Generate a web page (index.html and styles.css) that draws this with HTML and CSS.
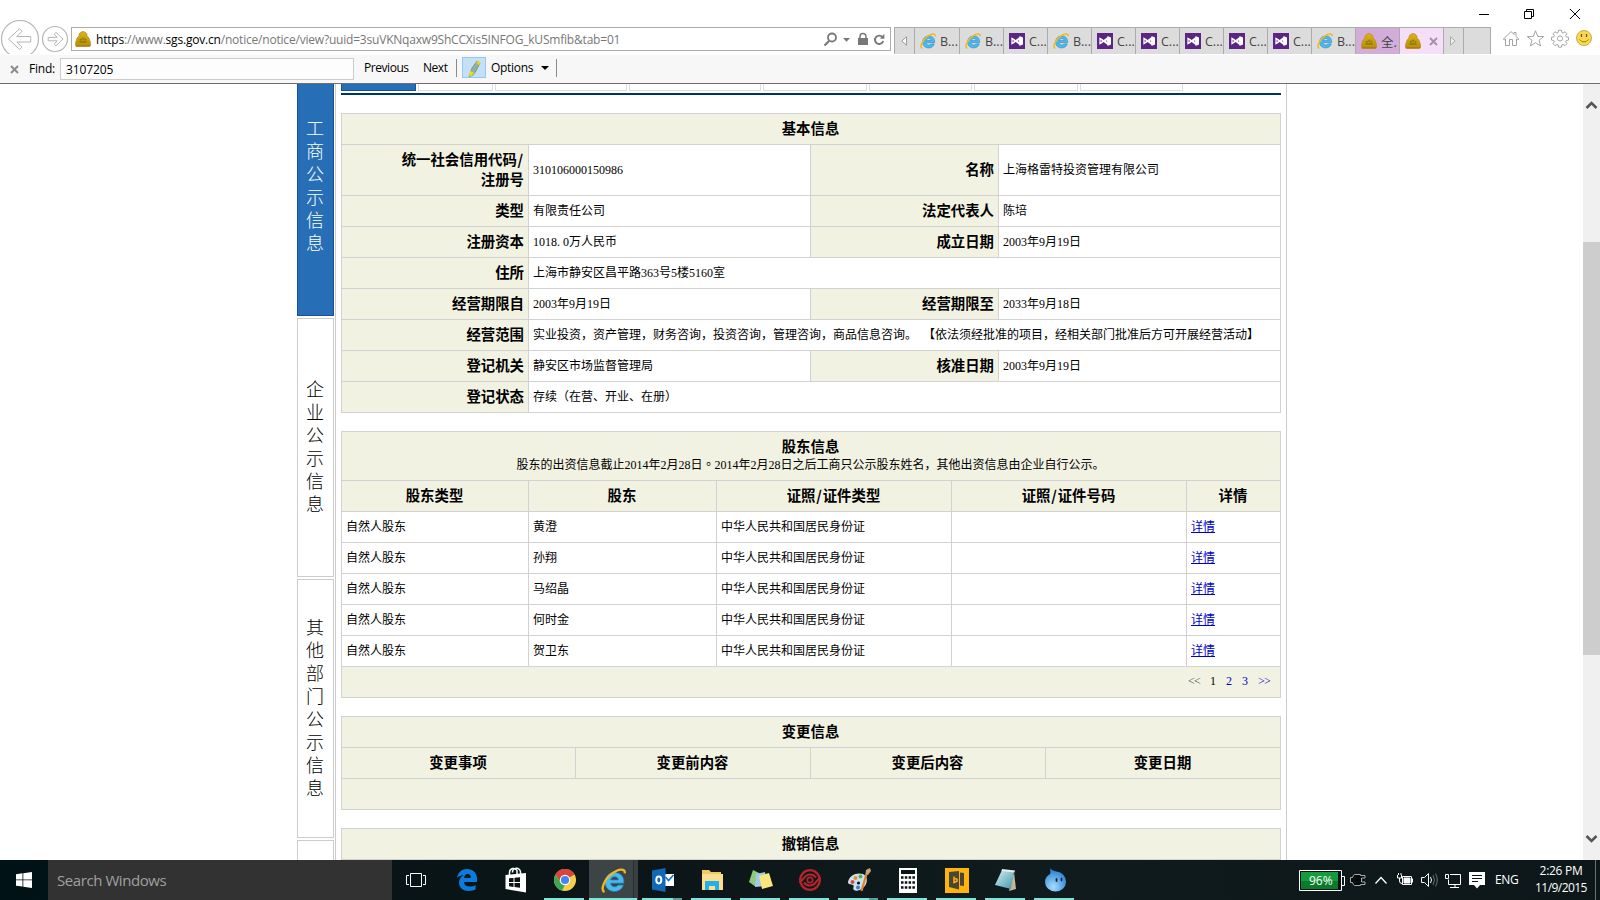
FILE: index.html
```html
<!DOCTYPE html>
<html lang="zh-CN">
<head>
<meta charset="utf-8">
<title>sgs.gov.cn</title>
<link rel="stylesheet" href="styles.css">
</head>
<body>
<svg class="defs" aria-hidden="true">
  <defs>
    <linearGradient id="gold" x1="0" y1="0" x2="0" y2="1"><stop offset="0" stop-color="#d9b31c"/><stop offset="1" stop-color="#b88d08"/></linearGradient>
    <linearGradient id="glass" x1="0" y1="0" x2="1" y2="1"><stop offset="0" stop-color="#d8f0f4"/><stop offset="1" stop-color="#3f96a8"/></linearGradient>
    <radialGradient id="drop" cx=".4" cy=".8" r=".8"><stop offset="0" stop-color="#a8dcff"/><stop offset="1" stop-color="#1c78d0"/></radialGradient>
  </defs>
  <symbol id="ie" viewBox="0 0 16 16">
    <path d="M14.600 9.700H6.200c.2 1.500 1.200 2.300 2.600 2.300 1 0 1.700-.4 2.200-1.100h3.300c-.8 2.600-2.900 4.100-5.700 4.100-3.500 0-6-2.400-6-5.900 0-3.600 2.500-6.200 6.100-6.200 3.900 0 6.300 2.700 5.900 6.800zM6.200 7.600h4.900c-.2-1.300-1.100-2-2.400-2S6.500 6.300 6.200 7.600z" fill="#4bb8ee" stroke="#1d7fba" stroke-width=".5"/>
    <path d="M2.300 15.300C-.6 14.500 1.800 7.500 7 3.600 11.300.4 15.600 0 15.200 3.400" fill="none" stroke="#f3b81c" stroke-width="1.500"/>
  </symbol>
  <symbol id="vs" viewBox="0 0 16 16">
    <rect width="16" height="16" fill="#5c2484"/>
    <path d="M3 5.500v5l4-2.500zM7.800 8l3-2.200v4.400z" fill="none" stroke="#fff" stroke-width="1.300"/>
    <path d="M3 5.500L11 11.500M3 10.500l8-6" stroke="#fff" stroke-width="1.300"/>
    <path d="M10.500 3l3.500 1.400v7.200L10.500 13z" fill="#fff"/>
  </symbol>
  <symbol id="emblem" viewBox="0 0 16 16">
    <path d="M6 1q2-1 4 0l2 2v2l2 2 1.700 5v2.500q-1 1.500-2.500 1.300H2.500Q.5 15.800.4 14v-2L2 7l2-2V3z" fill="url(#gold)" stroke="#b98517" stroke-width=".6"/>
    <path d="M4 8.500Q8 4 12 8.500L13.500 12q-5.500 2-11 0z" fill="#b99a0b"/>
    <path d="M5 8.800h1.500M7.300 7.900H9M9.800 8.800h1.300M4.500 11h7" stroke="#79650a" fill="none"/>
    <path d="M1 14.700h14" stroke="#b17716"/>
  </symbol>
</svg>

<div class="screen">
  <header class="chrome">
    <div class="caption">
      <svg width="160" height="27" viewBox="1440 0 160 27" fill="none" stroke="#000">
        <path d="M1479 14.500h10"/>
        <path d="M1524.500 11.500h7v7h-7zM1526.500 11.500v-2h7v7h-2"/>
        <path d="M1570 9l10 10M1580 9l-10 10"/>
      </svg>
    </div>
    <div class="navrow">
      <svg class="history" width="71" height="34" viewBox="0 20 71 34" fill="none" stroke="#b5b5b5">
        <circle cx="20" cy="39" r="18.500" stroke-width="1.200"/>
        <path d="M8.500 39l11-10.200 2.500 2.500-5.300 5.200h14v5.500H16.800l5.300 5.200-2.500 2.300z"/>
        <circle cx="55" cy="39" r="12.500" stroke-width="1.200"/>
        <path d="M63 39l-7-6.500-1.800 1.700 3 3.200h-9v3.400h9l-3 3.200 1.800 1.700z"/>
      </svg>
      <div class="address">
        <svg class="fav" width="16" height="16"><use href="#emblem"/></svg>
        <span class="url"><b>https</b>://www.<b>sgs.gov.cn</b>/notice/notice/view?uuid=3suVKNqaxw9ShCCXis5INFOG_kUSmfib&amp;tab=01</span>
        <svg class="tools" width="68" height="22" viewBox="820 28 68 22" fill="none" stroke="#777">
          <circle cx="832" cy="37.500" r="4" stroke-width="1.800"/><path d="M829 41l-4.500 4.500" stroke-width="2.200"/>
          <path d="M843 38h7l-3.500 3.700z" fill="#777" stroke="none"/>
          <path d="M858 38h10v7h-10z" fill="#777" stroke="none"/><path d="M860 38v-1.500a3 3 0 0 1 6 0V38" stroke-width="1.500"/>
          <path d="M882.500 37.200A4.200 4.200 0 1 0 883.200 41" stroke-width="1.900"/><path d="M880 38.800h4.300v-5z" fill="#777" stroke="none"/>
        </svg>
      </div>
      <div class="tabs">
        <span class="tab arrow"><svg width="6" height="10" viewBox="0 0 6 10"><path d="M5.500.8v8.400L.8 5z" fill="#fff" stroke="#999"/></svg></span>
        <span class="tab wide"><svg class="fav"><use href="#ie"/></svg>B...</span>
        <span class="tab"><svg class="fav"><use href="#ie"/></svg>B...</span>
        <span class="tab"><svg class="fav"><use href="#vs"/></svg>C...</span>
        <span class="tab"><svg class="fav"><use href="#ie"/></svg>B...</span>
        <span class="tab"><svg class="fav"><use href="#vs"/></svg>C...</span>
        <span class="tab"><svg class="fav"><use href="#vs"/></svg>C...</span>
        <span class="tab"><svg class="fav"><use href="#vs"/></svg>C...</span>
        <span class="tab"><svg class="fav"><use href="#vs"/></svg>C...</span>
        <span class="tab"><svg class="fav"><use href="#vs"/></svg>C...</span>
        <span class="tab"><svg class="fav"><use href="#ie"/></svg>B...</span>
        <span class="tab group"><svg class="fav"><use href="#emblem"/></svg>全.</span>
        <span class="tab active"><svg class="fav"><use href="#emblem"/></svg><svg class="close" width="9" height="9" viewBox="0 0 9 9"><path d="M1 1l7 7M8 1L1 8" stroke="#a590a8" stroke-width="1.900"/></svg></span>
        <span class="tab arrow"><svg width="6" height="10" viewBox="0 0 6 10"><path d="M.5.8v8.400L5.200 5z" fill="#eee" stroke="#aaa"/></svg></span>
        <span class="tab new"></span>
      </div>
      <svg class="commands" width="109" height="27" viewBox="1491 27 109 27" fill="none" stroke="#a3a3a3">
        <path d="M1503.500 39l7.500-7.500 3 3v-2h2v4l2.800 2.500-1 1-1.300-1v6.500h-4v-6h-3v6h-4V39l-1.300 1z"/>
        <path d="M1535.500 30.800l2.200 5.600 6 .2-4.700 3.700 1.600 5.700-5.100-3.300-5.100 3.300 1.600-5.700-4.700-3.700 6-.2z"/>
        <path d="M1558.600 31h2.800l.4 2.200 1.300.6 1.900-1.300 2 2-1.300 1.900.6 1.300 2.200.4v2.800l-2.200.4-.6 1.300 1.300 1.900-2 2-1.900-1.300-1.300.6-.4 2.200h-2.800l-.4-2.200-1.300-.6-1.900 1.300-2-2 1.300-1.900-.6-1.300-2.200-.4v-2.800l2.200-.4.600-1.300-1.300-1.900 2-2 1.900 1.300 1.300-.6z" transform="translate(0 -.8)"/>
        <circle cx="1560" cy="38.500" r="2.600"/>
        <circle cx="1584" cy="38" r="7.500" fill="#fbd94d" stroke="#c9a94a"/>
        <path d="M1581.500 34v3M1586.500 34v3" stroke="#6b5310" stroke-width="1.300"/><path d="M1579.500 39.500q4.500 5 9 0" stroke="#a17c20"/>
      </svg>
    </div>
    <div class="findbar">
      <svg class="x" width="9" height="9" viewBox="0 0 9 9"><path d="M1 1l7 7M8 1L1 8" stroke="#8b8b8b" stroke-width="1.900"/></svg>
      <span class="lbl">Find:</span>
      <span class="field">3107205</span>
      <span class="prev">Previous</span>
      <span class="next">Next</span>
      <i class="sep"></i>
      <span class="marker"><svg width="22" height="20" viewBox="0 0 22 20"><path d="M7 16l2-6 5-7 3 2-4 8-3 4-4 2z" fill="#8fb0a4" stroke="#75806a" stroke-width=".7"/><path d="M13 5l1.500-2.200 3 1.800-1.300 2.600z" fill="#e6d21c"/><path d="M7.500 13l3.500 1.800-2 2.500-3 1.500z" fill="#f2e200"/></svg></span>
      <span class="opts">Options</span>
      <svg class="caret" width="8" height="4"><path d="M0 0h8L4 4z"/></svg>
      <i class="sep"></i>
    </div>
  </header>

  <main class="viewport">
    <nav class="side">
      <div class="sideitem on">工商公示信息</div>
      <div class="sideitem">企业公示信息</div>
      <div class="sideitem">其他部门公示信息</div>
      <div class="sideitem"></div>
    </nav>
    <section class="content">
      <div class="subtabs">
        <i class="on"></i><i></i><i class="l"></i><i class="l"></i><i class="m"></i><i class="s"></i><i class="m"></i><i class="s"></i>
      </div>

      <div class="grid basic">
        <div class="th full">基本信息</div>
        <div class="th r tall">统一社会信用代码<span class="half">/</span><br>注册号</div><div class="high">310106000150986</div><div class="th r">名称</div><div class="high">上海格雷特投资管理有限公司</div>
        <div class="th r">类型</div><div>有限责任公司</div><div class="th r">法定代表人</div><div>陈培</div>
        <div class="th r">注册资本</div><div>1018<span class="dot">.</span>0万人民币</div><div class="th r">成立日期</div><div>2003年9月19日</div>
        <div class="th r">住所</div><div class="span3">上海市静安区昌平路363号5楼5160室</div>
        <div class="th r">经营期限自</div><div>2003年9月19日</div><div class="th r">经营期限至</div><div>2033年9月18日</div>
        <div class="th r">经营范围</div><div class="span3">实业投资，资产管理，财务咨询，投资咨询，管理咨询，商品信息咨询。&nbsp;&nbsp;【依法须经批准的项目，经相关部门批准后方可开展经营活动】</div>
        <div class="th r">登记机关</div><div>静安区市场监督管理局</div><div class="th r">核准日期</div><div>2003年9月19日</div>
        <div class="th r">登记状态</div><div class="span3">存续（在营、开业、在册）</div>
      </div>

      <div class="grid holders">
        <div class="th full stack"><span>股东信息</span><small>股东的出资信息截止2014年2月28日<span class="mid" lang="zh-TW">。</span>2014年2月28日之后工商只公示股东姓名，其他出资信息由企业自行公示。</small></div>
        <div class="th">股东类型</div><div class="th">股东</div><div class="th">证照<span class="half">/</span>证件类型</div><div class="th">证照<span class="half">/</span>证件号码</div><div class="th">详情</div>
        <div>自然人股东</div><div>黄澄</div><div>中华人民共和国居民身份证</div><div></div><div><a href="#">详情</a></div>
        <div>自然人股东</div><div>孙翔</div><div>中华人民共和国居民身份证</div><div></div><div><a href="#">详情</a></div>
        <div>自然人股东</div><div>马绍晶</div><div>中华人民共和国居民身份证</div><div></div><div><a href="#">详情</a></div>
        <div>自然人股东</div><div>何时金</div><div>中华人民共和国居民身份证</div><div></div><div><a href="#">详情</a></div>
        <div>自然人股东</div><div>贺卫东</div><div>中华人民共和国居民身份证</div><div></div><div><a href="#">详情</a></div>
        <div class="full pager"><span class="arrows off">&lt;&lt;</span><span>1</span><span class="lnk">2</span><span class="lnk">3</span><span class="arrows lnk">&gt;&gt;</span></div>
      </div>

      <div class="grid changes">
        <div class="th full">变更信息</div>
        <div class="th">变更事项</div><div class="th">变更前内容</div><div class="th">变更后内容</div><div class="th">变更日期</div>
        <div class="th full"></div>
      </div>

      <div class="grid changes">
        <div class="th full">撤销信息</div>
      </div>
    </section>
    <div class="scroll">
      <svg width="17" height="17" viewBox="0 0 17 17"><path d="M3.500 12L8.500 7l5 5" fill="none" stroke="#555" stroke-width="2.500"/></svg>
      <i class="thumb"></i>
      <svg width="17" height="17" viewBox="0 0 17 17"><path d="M3.500 5l5 5 5-5" fill="none" stroke="#555" stroke-width="2.500"/></svg>
    </div>
  </main>

  <footer class="taskbar">
    <div class="start"><svg width="16" height="16" viewBox="0 0 16 16" fill="#fff"><path d="M0 2.200l6.500-.9v6.200H0zM7.300 1.200L16 0v7.500H7.300zM0 8.300h6.500v6.300L0 13.700zM7.300 8.300H16V16l-8.700-1.200z"/></svg></div>
    <div class="search">Search Windows</div>
    <div class="app view"><svg width="20" height="16" viewBox="0 0 20 16" fill="none" stroke="#fff"><path d="M4.500 1.500h11v13h-11zM3 3.500H.5v9H3M17 3.500h2.500v9H17"/></svg></div>
    <div class="app"><svg width="22" height="24" viewBox="0 0 22 24"><path d="M1 10C2 4 6 1 11 1c6 0 10 4 10 9.500V14H8c.2 3 2.400 4.600 6 4.600 2 0 4-.6 5.600-1.600v4.600C18 22.500 15.500 23 13 23c-6 0-10-3.400-10-8.500C3 11 5 8.500 8 7c-3 .3-5.500 1.200-7 3zM8 10h6.800C15 7.800 13.800 6 11.500 6 9.600 6 8.400 7.800 8 10z" fill="#0b7bdf"/></svg></div>
    <div class="app"><svg width="24" height="28" viewBox="0 0 24 28"><path d="M1.500 9L22 7v19.500L1.500 23z" fill="#fff"/><path d="M5.500 9V6.500a4 4 0 0 1 7.500-2V8M8.500 6.500a4 4 0 0 1 8-.5v2" fill="none" stroke="#fff" stroke-width="1.500"/><path d="M5 12.300l4.500-.4v4H5zM10.500 11.800l5.500-.5v4.600h-5.500zM5 17h4.500v3.900L5 20.300zM10.500 17H16v4.700l-5.500-.7z" fill="#0b1315"/></svg></div>
    <div class="app run"><svg width="24" height="24" viewBox="0 0 24 24"><circle cx="12" cy="12" r="11" fill="#f6cf4a"/><path d="M12 12L2.500 6.500A11 11 0 0 1 21.600 6.500z" fill="#d8453a"/><path d="M12 1a11 11 0 0 1 9.600 5.500H12L7.500 14.500 2.500 6.500A11 11 0 0 1 12 1z" fill="#d8453a"/><path d="M2.500 6.500l5 8.500 4.500 2-3 5.600A11 11 0 0 1 2.500 6.500z" fill="#3aa757"/><circle cx="12" cy="12" r="5.200" fill="#fff"/><circle cx="12" cy="12" r="4.100" fill="#4285f4"/></svg></div>
    <div class="app run current"><svg width="25" height="25"><use href="#ie"/></svg></div>
    <div class="app run multi"><svg width="24" height="24" viewBox="0 0 24 24"><path d="M12 6h11v12H12z" fill="#fff"/><path d="M14.500 9l3 3.500L22.500 7" stroke="#1270c0" stroke-width="1.600" fill="none"/><path d="M1 2.500L14.500 0v24L1 21.500z" fill="#0f68b8"/><ellipse cx="7.800" cy="12" rx="2.500" ry="3.400" fill="none" stroke="#fff" stroke-width="2"/></svg></div>
    <div class="app run"><svg width="24" height="24" viewBox="0 0 24 24"><path d="M2 2h7l2 2h10v17H2z" fill="#eec766"/><path d="M2 6h21v16H2z" fill="#fbdf8e"/><path d="M5 13h14v9h-4v-4H9v4H5z" fill="#1fb1ee"/></svg></div>
    <div class="app run"><svg width="26" height="24" viewBox="0 0 26 24"><path d="M5 2l8 4-5 13-7-5z" fill="#8fc97e"/><path d="M8 6l9-2 2 14-12 1z" fill="#a3c8e8"/><path d="M11 8l10-3 4 13-11 3z" fill="#f9e67c"/></svg></div>
    <div class="app run"><svg width="24" height="24" viewBox="0 0 24 24" fill="none" stroke="#b3242a"><circle cx="12" cy="12" r="9.800" stroke-width="2.300"/><path d="M1 13.500c5 .5 4-7 11-7 3 0 4.500 1 6 3M23 10.500c-5-.5-4 7-11 7-3 0-4.500-1-6-3" stroke-width="2.200"/><circle cx="12" cy="12" r="2.700" stroke-width="1.700"/></svg></div>
    <div class="app run multi"><svg width="24" height="24" viewBox="0 0 24 24"><path d="M1 14C2 7 10 4 16 6c5 2 5 9 1 13-3 3-8 5-10 3s1-4-1-5-5 0-5-3z" fill="#c9e2f2"/><circle cx="5.500" cy="14" r="2" fill="#d94a3c"/><circle cx="8.500" cy="10" r="2" fill="#e8902a"/><circle cx="13.500" cy="8.500" r="2" fill="#56b04a"/><circle cx="11" cy="19.500" r="2" fill="#3f7fd0"/><circle cx="11.500" cy="15" r="1.600" fill="#10181a"/><path d="M14.500 23L19.500 6" stroke="#e0842b" stroke-width="2.200"/><path d="M18.500 6L19 2l4-2 1 3-3 4z" fill="#c9a679"/></svg></div>
    <div class="app run"><svg width="18" height="25" viewBox="0 0 18 25"><path d="M0 0h18v25H0z" fill="#fff"/><path d="M2 2h14v4H2z" fill="#0b1315"/><path d="M2 9.500h14M2 14.500h14M2 19.500h14" stroke="#0b1315" stroke-width="2.500" stroke-dasharray="2.500 1.300"/></svg></div>
    <div class="app run"><svg width="24" height="25" viewBox="0 0 24 25"><path d="M0 0h24v25H0z" fill="#fdb40b"/><path d="M4 4l10-1v18.500L4 19zM15 4.500l4 .5v13l-4-.5z" fill="#4b4438"/><path d="M9 8.500v6l3-1.300v-2l-2-.7" fill="none" stroke="#fdb40b" stroke-width="1.500"/></svg></div>
    <div class="app run"><svg width="24" height="24" viewBox="0 0 24 24"><path d="M20 4l2 17-7 2z" fill="#c9b697"/><path d="M8 2l12 1-3 18L1 17z" fill="url(#glass)"/><path d="M8 1l13 1.500-.5 2L7.500 3z" fill="#e9eeee"/></svg></div>
    <div class="app run"><svg width="24" height="24" viewBox="0 0 24 24"><path d="M7 0c2 3 5 3 9 4 5 2 7 6 7 10a10.500 9.500 0 0 1-21 0c0-4 2-6 5-8 1-2 0-4 0-6z" fill="url(#drop)"/><ellipse cx="13.500" cy="12" rx="1" ry="2" fill="#123"/><ellipse cx="18.500" cy="11.500" rx=".9" ry="1.900" fill="#123"/></svg></div>
    <div class="tray">
      <svg class="trayicons" width="200" height="40" viewBox="1296 860 200 40" fill="none" stroke="#fff">
        <path d="M1299.500 870.500h42v20h-42z" fill="#0a1113"/><path d="M1301 872h37v17h-37z" fill="#159a3d" stroke="none"/><path d="M1301 881h37v8h-37z" fill="#0b7a2a" stroke="none"/><path d="M1342 876.500h2.500v9h-2.500"/>
        <path d="M1354.500 874.500h6v1h4.500v2.500h-3.500v4h3.500v2.500h-4.500v1h-6q-1.500-.5-2-3h-2v-5h2q.5-2.500 2-3z" fill="#050a0b" stroke="#aaa"/>
        <path d="M1375.500 883.500l5.500-6 5.500 6" stroke-width="1.300"/>
        <path d="M1402.500 876.500h9v8h-9z"/><path d="M1404 878h6v5h-6z" fill="#fff"/><path d="M1412.500 878.500v4M1397.500 875v3h4v-3M1399.500 878v3q0 2.500 2.500 2.500M1398.500 873v2M1401 873v2"/>
        <path d="M1421.500 877.500h3l4-4v13l-4-4h-3z"/><path d="M1430.500 877q2 3 0 6"/><path d="M1433 875q3 5 0 10M1435.500 873.500q3.500 6.500 0 13" stroke="#687174"/>
        <path d="M1450 874.500h10.500v10H1448.500v-5M1455 885v3M1450 887.500h9M1445.500 874.500h3v4h-3z"/>
        <path d="M1469 872h16v13h-5l-3 3.500-3-3.500h-5z" fill="#fff" stroke="none"/><path d="M1472 875.500h10M1472 878.500h10M1472 881.500h6" stroke="#0b1315"/>
      </svg>
      <span class="pct">96%</span>
      <span class="lang">ENG</span>
      <div class="clock"><span>2:26 PM</span><span class="date">11/9/2015</span></div>
      <i class="peek"></i>
    </div>
  </footer>
</div>
</body>
</html>
```
FILE: styles.css
```css
* { box-sizing: border-box; }
body { margin: 0; background: #fff; font-family: "Open Sans", "Noto Sans CJK SC", sans-serif; }
.defs { position: absolute; width: 0; height: 0; }
.screen { width: 1600px; height: 900px; overflow: hidden; display: flex; flex-direction: column; }
svg { display: block; flex: none; }
i { display: block; }

/* Browser chrome */
.chrome { height: 84px; flex: none; display: flex; flex-direction: column; }
.caption { height: 27px; display: flex; justify-content: flex-end; }
.navrow { height: 27px; display: flex; align-items: flex-start; }
.history { margin-top: -7px; }
.address { width: 820px; height: 24px; border: 1px solid #ababab; display: flex; align-items: center; padding-left: 3px; background: #fff; }
.fav { width: 16px; height: 16px; }
.url { font-size: 12px; color: #777; margin: 1px 0 0 5px; width: 724px; white-space: nowrap; letter-spacing: -.21px; }
.url { letter-spacing: -.2px; word-spacing: 0; }
.url b { font-weight: 400; color: #000; }
.tabs { margin-left: 3px; height: 27px; width: 597px; display: flex; border: 1px solid #ababab; border-bottom: 0; background: #dcdcdc; }
.tab { width: 44px; height: 26px; flex: none; display: flex; align-items: center; padding-left: 5px; font-size: 12.5px; color: #444; border-left: 1px solid #ababab; gap: 4px; white-space: nowrap; overflow: hidden; }
.tab.wide { width: 45px; }
.tab.arrow { width: 20px; padding: 0 0 0 6px; }
.tab.arrow:first-child { width: 19px; border-left: 0; }
.tab.group { background: #d3add9; }
.tab.active { background: #f5dff8; gap: 8px; }
.tab.new { width: 27px; }
.findbar { margin-top: 1px; height: 29px; background: #f7f7f7; border-bottom: 1px solid #6e6e6e; display: flex; align-items: flex-start; font-size: 12px; line-height: 16px; color: #000; }
.findbar .x { margin: 10px 0 0 10px; }
.findbar .lbl { margin: 6px 0 0 10px; width: 31px; letter-spacing: -.2px; }
.field { width: 294px; height: 22px; margin-top: 3px; border: 1px solid #ccc; background: #fdfdfd; padding: 3px 5px; letter-spacing: -.1px; }
.prev { margin: 5px 0 0 10px; width: 59px; letter-spacing: -.45px; }
.next { margin-top: 5px; width: 33px; letter-spacing: -.45px; }
.sep { width: 1px; height: 18px; margin-top: 4px; background: #8a8a8a; }
.marker { margin: 2px 0 0 5px; width: 24px; height: 21px; border: 1px solid #90c8f6; background: #c4e0f7; }
.opts { margin: 5px 0 0 5px; width: 50px; letter-spacing: -.3px; }
.caret { margin: 11px 7px 0 0; }

/* Page */
.viewport { height: 776px; flex: none; overflow: hidden; display: flex; padding-left: 297px; background: #fff; }
.side { width: 37px; margin: -27px 1px 0 0; flex: none; display: flex; flex-direction: column; gap: 2px; }
.sideitem { height: 259px; flex: none; border: 1px solid #ccc; padding: 0 10px 4px 8px; display: flex; align-items: center; font: 300 18px/23px "Noto Sans CJK SC", sans-serif; color: #000; word-break: break-all; width: 37px; }
.sideitem.on { background: #266fb7; border-color: #1b4f9c; color: #fff; }
.content { width: 952px; flex: none; border: solid #ccc; border-width: 0 1px; padding: 0 5px; font: 12px/18px "Liberation Serif", "Noto Sans CJK SC", serif; color: #000; }
.subtabs { height: 11px; display: flex; gap: 2px; border-bottom: 2px solid #036; margin-bottom: 18px; }
.subtabs i { width: 75px; height: 7px; border: 1px solid #ddd; border-top: 0; }
.subtabs .on { background: #266fb7; border-color: #1b4f9c; }
.subtabs .l { width: 132px; }
.subtabs .m { width: 104px; }
.subtabs .s { width: 103px; }
.grid { display: grid; grid-auto-rows: 31px; border: solid #d2d2d2; border-width: 1px 0 0 1px; margin-bottom: 18px; }
.grid > div { border: solid #d2d2d2; border-width: 0 1px 1px 0; padding: 1px 5px 0 4px; line-height: 29px; white-space: nowrap; }
.grid > .high { line-height: 49px; }
.basic { grid-template-columns: 187px 282px 188px 282px; grid-template-rows: 31px 51px; }
.holders { grid-template-columns: 187px 188px 235px 235px 94px; grid-template-rows: 49px; }
.changes { grid-template-columns: 234px 235px 235px 235px; }
.grid > .th { background: #f2f2e2; font: 700 14.4px/20px "Noto Sans CJK SC", sans-serif; display: flex; align-items: center; justify-content: center; padding: 0 5px 2px 4px; }
.grid > .th.r { justify-content: flex-end; text-align: right; padding-right: 4px; }
.grid > .th.tall { display: block; padding-top: 4px; }
.grid > .full { grid-column: 1 / -1; }
.grid > .span3 { grid-column: span 3; }
.grid > .stack { flex-direction: column; line-height: 19px; }
.stack small { font: 12px/18px "Liberation Serif", "Noto Sans CJK SC", serif; }
.mid { font-family: "Noto Sans CJK TC", sans-serif; }
.half { display: inline-block; width: .5em; text-align: center; }
.dot { display: inline-block; width: 6px; }
.content a { color: #00c; }
.grid > .pager { background: #f2f2e2; display: flex; justify-content: flex-end; gap: 10px; padding: 0 10px 1px 0; }
.arrows { width: 12px; letter-spacing: -.8px; }
.off { color: #444; }
.lnk { color: #00c; }
.scroll { width: 17px; margin-left: auto; background: #f0f0f0; display: flex; flex-direction: column; padding: 12px 0; }
.thumb { height: 413px; margin: 129px 0 176px; background: #cdcdcd; flex: none; }

/* Taskbar */
.taskbar { height: 40px; flex: none; display: flex; background: linear-gradient(90deg, #011216, #0b1517 35%, #101b1e 65%, #0d1719); color: #fff; }
.start { width: 48px; display: flex; align-items: center; justify-content: center; }
.search { width: 344px; background: #323232; color: #a0a0a0; font-size: 15px; line-height: 40px; padding-left: 9px; letter-spacing: -.43px; }
.app { width: 49px; flex: none; display: flex; align-items: center; justify-content: center; position: relative; }
.app.run::after { content: ""; position: absolute; left: 4px; right: 5px; bottom: 0; height: 2px; background: #85e2d8; }
.app.view { width: 50px; padding-right: 2px; }
.app.multi::after { background: linear-gradient(90deg, #85e2d8 31px, #5a9f98 31px); }
.app.current { background: linear-gradient(90deg, #3c4446 44px, #262f31 44px, #262f31 45px, #384042 45px); }
.app.current::after { left: 0; right: 1px; }
.tray { margin-left: auto; display: flex; position: relative; width: 304px; }
.pct { position: absolute; left: 13px; top: 12px; font-size: 12px; line-height: 17px; }
.lang { width: 40px; font-size: 12px; line-height: 39px; margin-left: -1px; letter-spacing: -.4px; }
.clock { width: 58px; font-size: 12px; line-height: 17px; padding-top: 2px; display: flex; flex-direction: column; align-items: center; white-space: nowrap; margin-left: -3px; letter-spacing: -.3px; }
.date { letter-spacing: -.55px; }
.peek { position: absolute; right: 4px; top: 0; width: 1px; height: 40px; background: #697275; }
```
